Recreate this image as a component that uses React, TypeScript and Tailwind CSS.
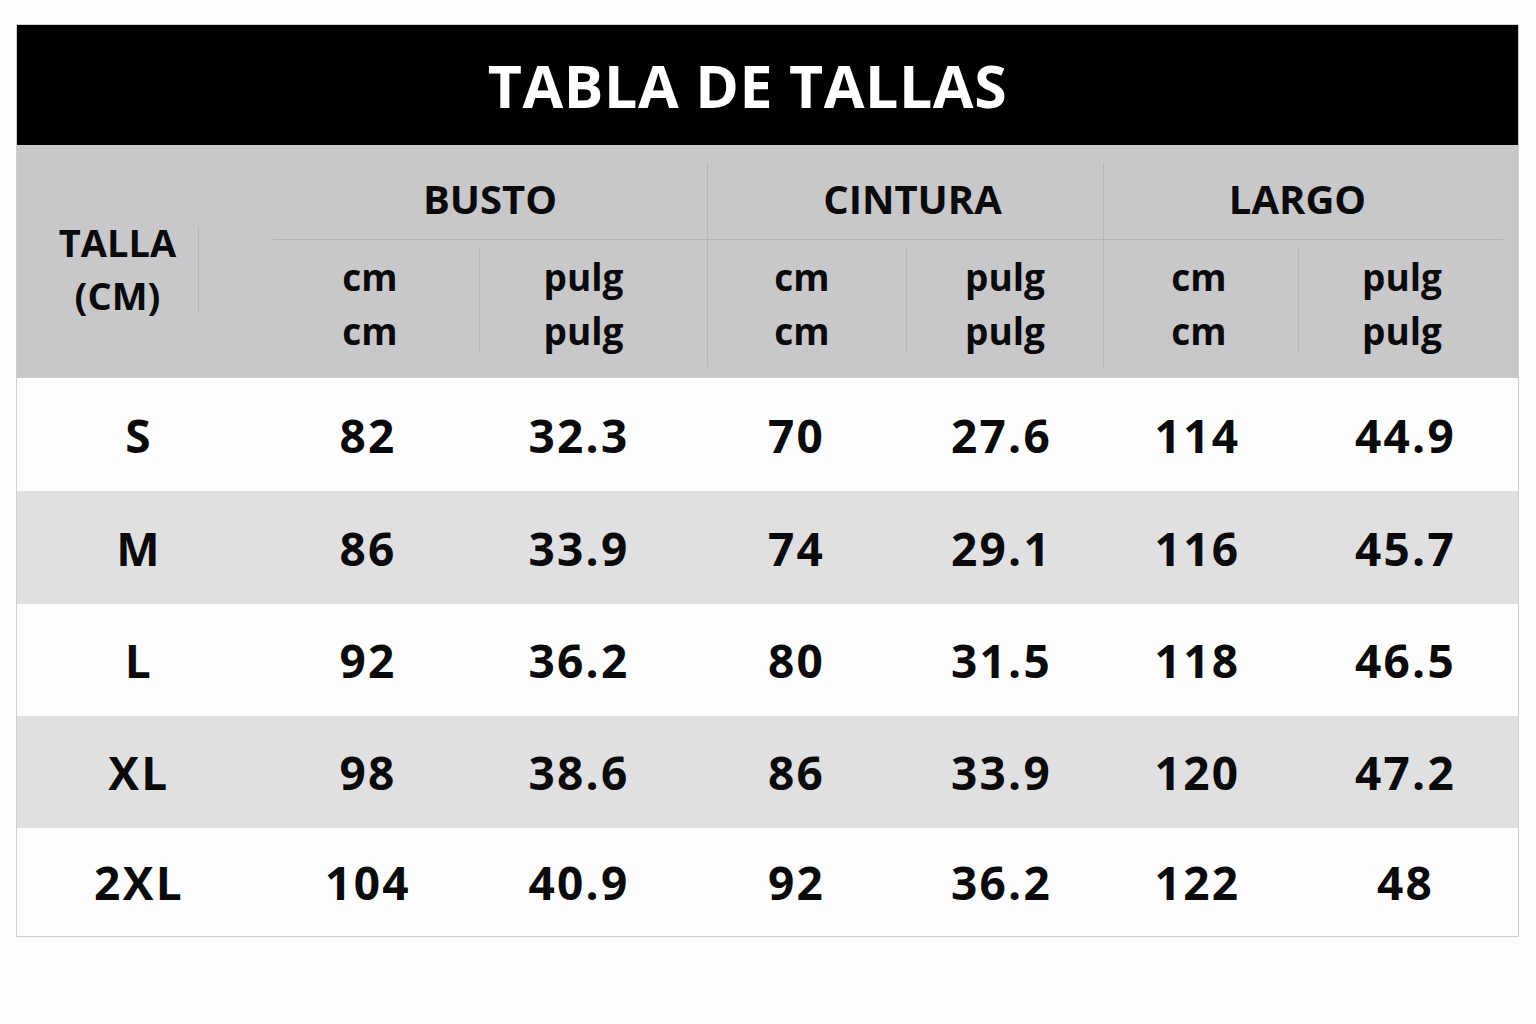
const rows = [
  { talla: "S", busto: ["82", "32.3"], cintura: ["70", "27.6"], largo: ["114", "44.9"] },
  { talla: "M", busto: ["86", "33.9"], cintura: ["74", "29.1"], largo: ["116", "45.7"] },
  { talla: "L", busto: ["92", "36.2"], cintura: ["80", "31.5"], largo: ["118", "46.5"] },
  { talla: "XL", busto: ["98", "38.6"], cintura: ["86", "33.9"], largo: ["120", "47.2"] },
  { talla: "2XL", busto: ["104", "40.9"], cintura: ["92", "36.2"], largo: ["122", "48"] },
];

const rowHeights = ["h-[113px]", "h-[113px]", "h-[112px]", "h-[112px]", "h-[108px]"];

function SubCell({ width, offset, divider }: { width: string; offset: string; divider?: boolean }) {
  return (
    <div className={`flex h-full ${width}`}>
      {divider && <div className="w-px mt-[8px] mb-[15px] bg-[#b4b4b6]" />}
      <div className={`flex-1 flex flex-col items-center justify-center leading-[54px] text-[37px] ${offset}`}>
        <span>{divider ? "pulg" : "cm"}</span>
        <span>{divider ? "pulg" : "cm"}</span>
      </div>
    </div>
  );
}

export default function App() {
  return (
    <div className="min-h-screen bg-[#fdfdfd] pt-[24px] pl-[16px]" style={{ fontFamily: '"Open Sans", "Noto Sans", sans-serif' }}>
      <div className="w-[1503px] border border-[#cfcfd1] text-[#0a0a0a] font-bold">
        {/* title */}
        <div className="h-[120px] bg-black flex items-center justify-center pr-[40px]">
          <h1 className="text-white text-[59px] tracking-[0.01em] leading-none">TABLA DE TALLAS</h1>
        </div>

        {/* header */}
        <div className="h-[233px] bg-[#c8c8ca] flex">
          <div className="w-[256px] flex items-center pt-[14px]">
            <div className="w-[181px] pl-[20px] flex flex-col items-center text-[38px] leading-[53px]">
              <span>TALLA</span>
              <span>(CM)</span>
            </div>
            <div className="w-px h-[86px] bg-[#b4b4b6]" />
          </div>

          {/* BUSTO */}
          <div className="w-[434px] flex flex-col mt-[18px] mb-[11px]">
            <div className="h-[77px] flex items-center justify-center border-b border-[#b4b4b6] text-[40px] pb-1">BUSTO</div>
            <div className="flex-1 flex">
              <SubCell width="w-[206px]" offset="pr-[12px]" />
              <SubCell width="w-[228px]" offset="pr-[20px]" divider />
            </div>
          </div>

          {/* CINTURA */}
          <div className="w-[396px] flex flex-col mt-[18px] mb-[11px] border-l border-[#b4b4b6]">
            <div className="h-[77px] flex items-center justify-center border-b border-[#b4b4b6] text-[40px] pb-1 pl-[14px]">CINTURA</div>
            <div className="flex-1 flex">
              <SubCell width="w-[198px]" offset="pr-[10px]" />
              <SubCell width="w-[197px]" offset="" divider />
            </div>
          </div>

          {/* LARGO */}
          <div className="w-[400px] flex flex-col mt-[18px] mb-[11px] border-l border-[#b4b4b6]">
            <div className="h-[77px] flex items-center justify-center border-b border-[#b4b4b6] text-[40px] pb-1 pr-[12px]">LARGO</div>
            <div className="flex-1 flex">
              <SubCell width="w-[194px]" offset="pr-[4px]" />
              <SubCell width="w-[205px]" offset="pl-[2px]" divider />
            </div>
          </div>
        </div>

        {/* body */}
        {rows.map((r, i) => (
          <div
            key={r.talla}
            className={`grid grid-cols-[256px_206px_228px_199px_197px_195px_219px] items-center text-[46px] tracking-[0.05em] leading-none ${rowHeights[i]} ${i % 2 ? "bg-[#e0e0e2]" : "bg-[#fdfdfd]"}`}
          >
            <div className="text-center pr-[12px]">{r.talla}</div>
            <div className="text-center pr-[16px]">{r.busto[0]}</div>
            <div className="text-center pr-[28px]">{r.busto[1]}</div>
            <div className="text-center pr-[20px]">{r.cintura[0]}</div>
            <div className="text-center pr-[6px]">{r.cintura[1]}</div>
            <div className="text-center pr-[6px]">{r.largo[0]}</div>
            <div className="text-center pr-[4px]">{r.largo[1]}</div>
          </div>
        ))}
      </div>
    </div>
  );
}
